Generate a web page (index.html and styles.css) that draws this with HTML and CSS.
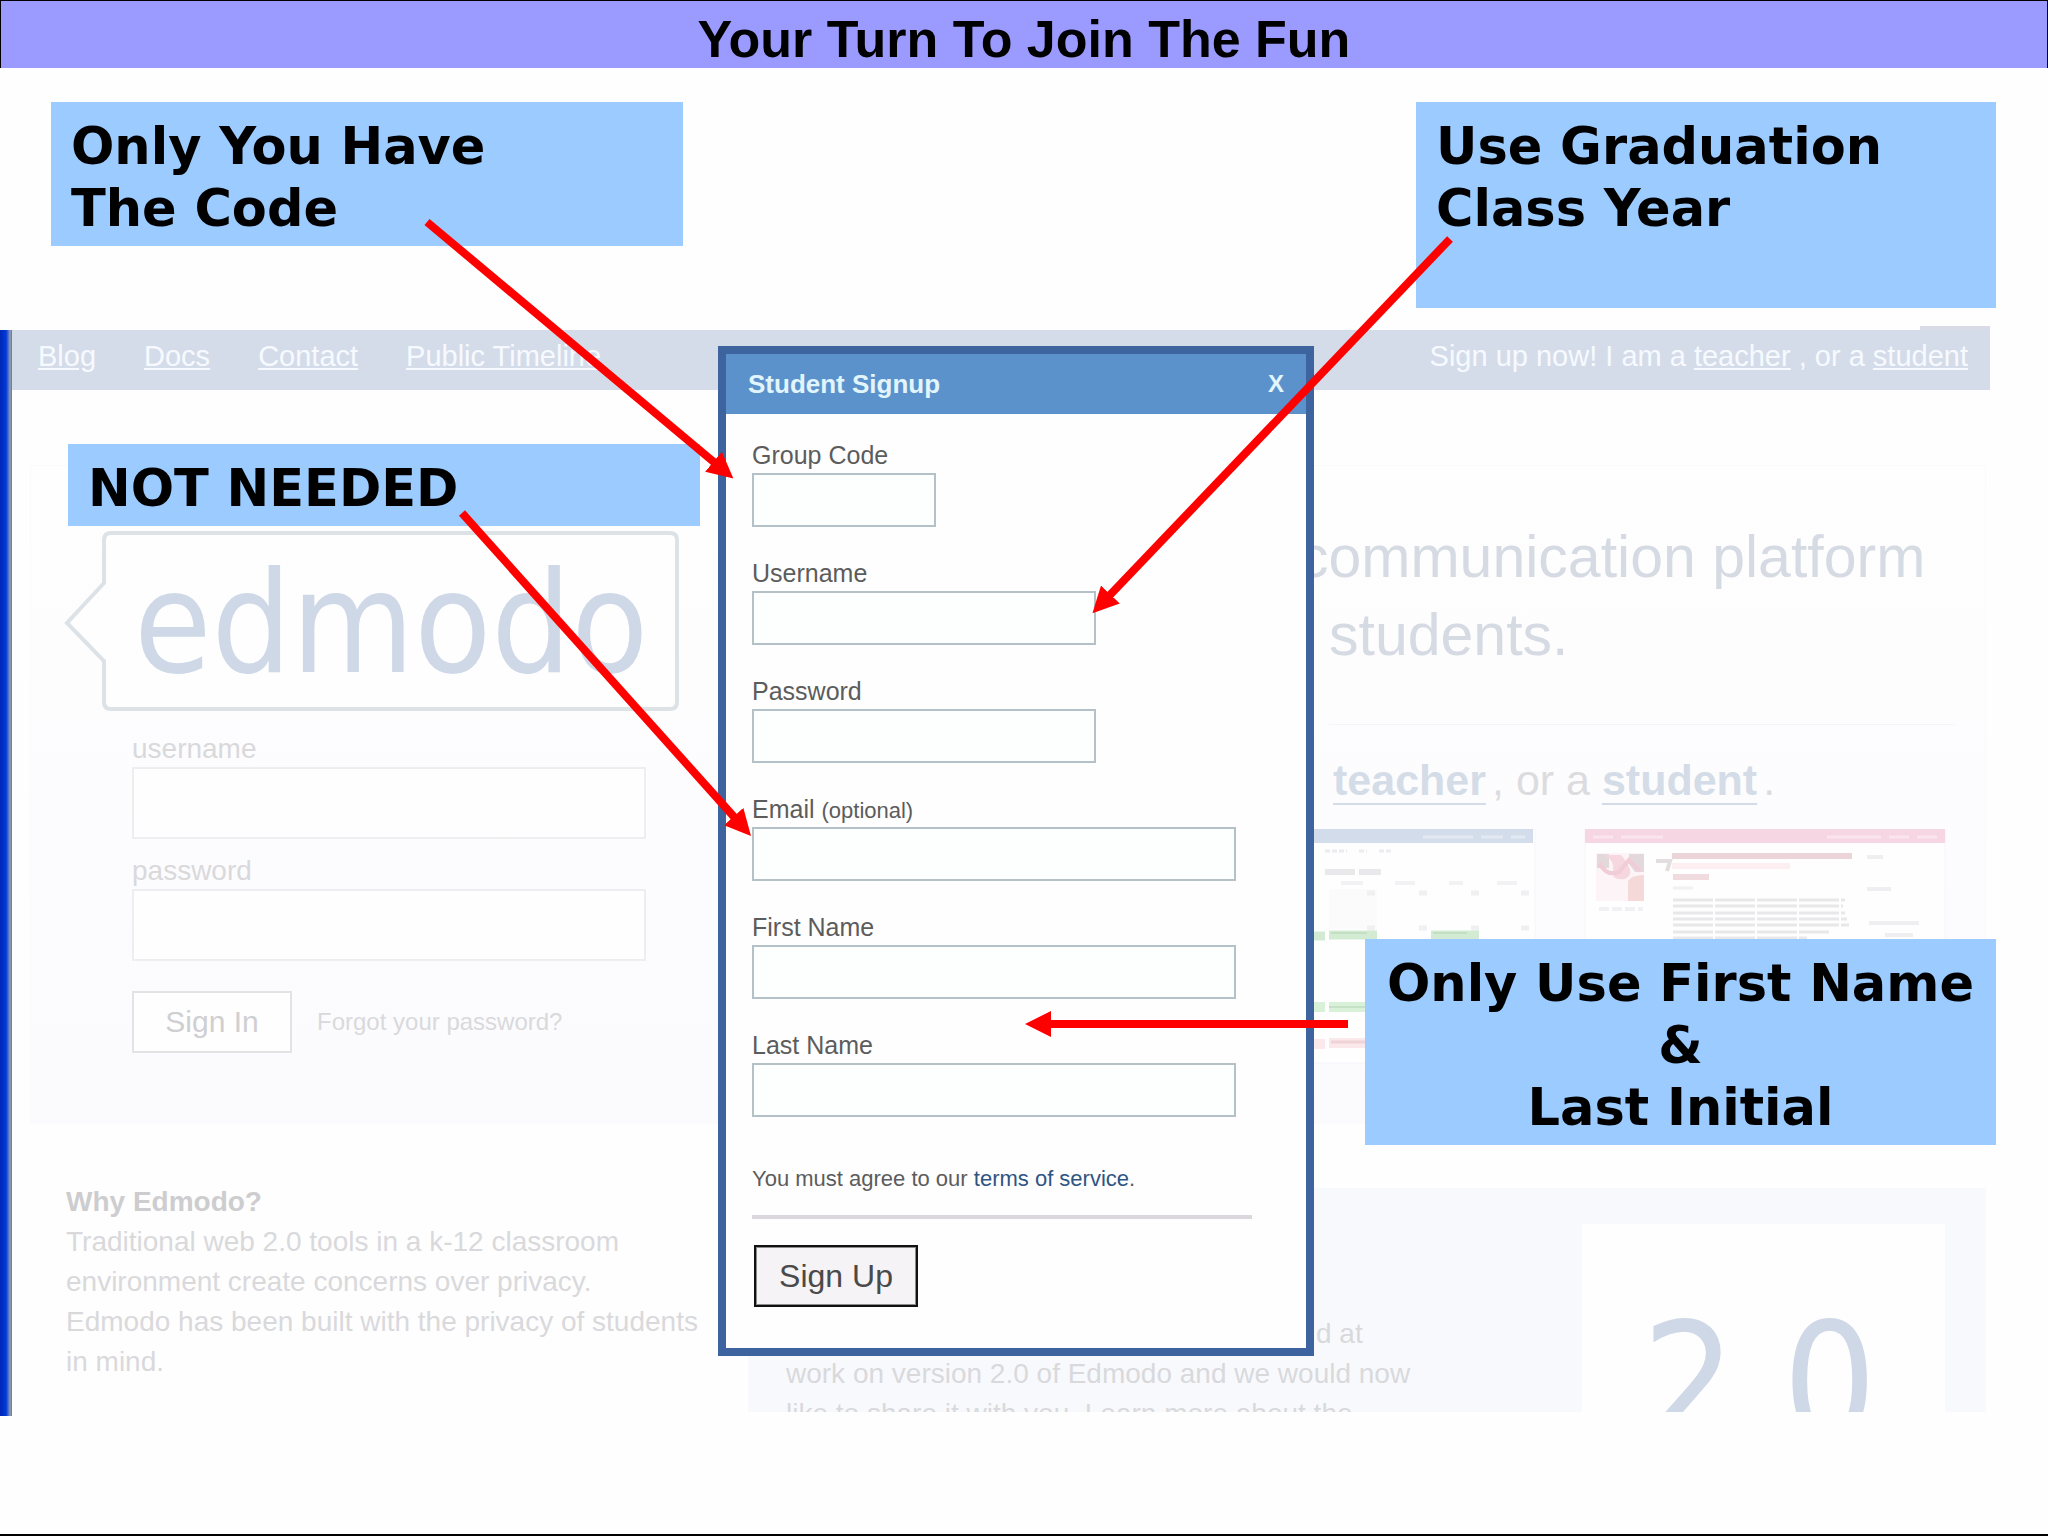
FILE: index.html
```html
<!DOCTYPE html>
<html lang="en">
<head>
<meta charset="UTF-8">
<title>Your Turn To Join The Fun</title>
<meta name="viewport" content="width=device-width, initial-scale=1.0">
<link rel="stylesheet" href="styles.css">
</head>

<body>

<h1 class="title">Your Turn To Join The Fun</h1>

<!-- FADED SITE -->
<div class="window">
    <div class="window-edge"></div>
    <div class="site">

        <nav class="nav">
            <div class="nav-links">
                <a href="#">Blog</a>
                <a href="#">Docs</a>
                <a href="#">Contact</a>
                <a href="#">Public Timeline</a>
            </div>
            <div>Sign up now! I am a <a href="#">teacher</a> , or a <a href="#">student</a></div>
        </nav>

        <div class="panel">
            <div class="left">
                <svg class="logo" width="616" height="182" viewBox="0 0 616 182">
                    <path d="M40 53V10q0-7 7-7H606q7 0 7 7V172q0 7-7 7H47q-7 0-7-7V131L3 93Z" fill="#fefefe" stroke="#dde2e7" stroke-width="4"/>
                    <text x="70" y="142" class="logo-text">edmodo</text>
                </svg>
                <form class="login">
                    <label for="login-user">username</label>
                    <input id="login-user" type="text">
                    <label for="login-pass">password</label>
                    <input id="login-pass" type="password">
                    <div class="login-row">
                        <button type="button">Sign In</button>
                        <a href="#">Forgot your password?</a>
                    </div>
                </form>
            </div>

            <div class="right">
                <div class="hero">communication platform</div>
                <div class="hero hero-end">students.</div>
                <hr>
                <div class="join"><a href="#">teacher</a>, or a <a href="#">student</a>.</div>
                <svg class="shots" width="686" height="240" viewBox="0 0 686 240">
                    <!-- calendar page -->
                    <rect x="0" y="0" width="236" height="234" fill="#fefefe" stroke="#f6f6fa"/>
                    <rect x="0" y="0" width="234" height="14" fill="#d2dcea"/>
                    <path d="M124 8h50M182 8h22M212 8h14" stroke="#e2e9f2" stroke-width="3"/>
                    <path d="M26 22h22M60 22h8M80 22h12" stroke="#ececef" stroke-width="3" stroke-dasharray="5 2"/>
                    <path d="M26 43h56" stroke="#e9e9eb" stroke-width="6" stroke-dasharray="30 4"/>
                    <path d="M42 54h22M96 54h20M150 54h14M198 54h20" stroke="#f2f2f4" stroke-width="4"/>
                    <rect x="30" y="60" width="48" height="40" fill="#fafbfa"/>
                    <path d="M68 64h8M120 64h8M172 64h8M222 64h8M68 99h8M120 99h8M172 99h8M222 99h8" stroke="#f0f0f2" stroke-width="5"/>
                    <path d="M14 107h12M30 106h48M132 106h48" stroke="#d3ebd3" stroke-width="9"/>
                    <path d="M32 104h36M134 104h34" stroke="#c3dfc3" stroke-width="2"/>
                    <path d="M14 178h12M30 178h48" stroke="#d9f0d9" stroke-width="10"/>
                    <path d="M30 178h48" stroke="#c6e2c6" stroke-width="2"/>
                    <path d="M14 215h12M30 214h48" stroke="#fae8ea" stroke-width="10"/>
                    <path d="M32 213h40" stroke="#efd3d6" stroke-width="3"/>
                    <!-- profile page -->
                    <rect x="286" y="0" width="360" height="234" fill="#fefefe" stroke="#f6f6fa"/>
                    <rect x="286" y="0" width="360" height="14" fill="#f6d6e3"/>
                    <path d="M294 8h20M322 8h42M528 8h54M590 8h20M618 8h20" stroke="#fae4ed" stroke-width="3"/>
                    <rect x="297" y="24" width="48" height="48" fill="#fcf4f6"/>
                    <path d="M298 25h12v14h-12ZM330 25h15v18h-9l-6-8Z" fill="#e3d9dd"/>
                    <path d="M306 26q10 6 8 16t12 8q8-4 4-12t-8-12Z" fill="#f6d7df"/>
                    <path d="M300 34q8 14 20 9l10-12 11 11" fill="none" stroke="#f0cdd6" stroke-width="4"/>
                    <path d="M329 52q4-6 16-6v26h-16Z" fill="#f5d8d8"/>
                    <path d="M300 80h44" stroke="#f1f1f3" stroke-width="4" stroke-dasharray="10 3"/>
                    <path d="M357 32h14l-3 10" fill="none" stroke="#e2dddf" stroke-width="4"/>
                    <rect x="373" y="24" width="180" height="6" fill="#ecd5d9"/>
                    <path d="M373 37h118" stroke="#fceef1" stroke-width="6"/>
                    <path d="M374 48h36" stroke="#f0dcdf" stroke-width="6"/>
                    <path d="M374 59h20" stroke="#f1f1f3" stroke-width="3"/>
                    <path d="M374 71h172M374 77h170M374 84h172M374 90h174M374 96h176M374 103h156M374 109h134" stroke="#e8e8ea" stroke-width="3" stroke-dasharray="40 2"/>
                    <path d="M568 28h16M568 60h24M570 94h50M586 106h28" stroke="#efeff2" stroke-width="4"/>
                </svg>
            </div>
        </div>

        <div class="lower">
            <div class="why">
                <h2>Why Edmodo?</h2>
                <p>Traditional web 2.0 tools in a k-12 classroom<br>environment create concerns over privacy.<br>Edmodo has been built with the privacy of students<br>in mind.</p>
            </div>
            <div class="news">
                <p>d at<br>work on version 2.0 of Edmodo and we would now<br>like to share it with you. Learn more about the</p>
                <div class="version">2.0</div>
            </div>
        </div>

    </div>
</div>

<!-- SIGNUP DIALOG -->
<form class="dialog">
    <div class="dialog-head">
        <span>Student Signup</span>
        <button type="button" class="close">X</button>
    </div>
    <div class="dialog-body">
        <label for="code">Group Code</label>
        <input id="code" class="short" type="text">
        <label for="user">Username</label>
        <input id="user" class="medium" type="text">
        <label for="pass">Password</label>
        <input id="pass" class="medium" type="password">
        <label for="email">Email <small>(optional)</small></label>
        <input id="email" type="text">
        <label for="first">First Name</label>
        <input id="first" type="text">
        <label for="last">Last Name</label>
        <input id="last" type="text">
        <p>You must agree to our <a href="#">terms of service</a>.</p>
        <hr>
        <button type="button" class="signup">Sign Up</button>
    </div>
</form>

<!-- CALLOUTS -->
<div class="callout code-note">Only You Have<br>The Code</div>
<div class="callout year-note">Use Graduation<br>Class Year<br>&nbsp;</div>
<div class="callout email-note">NOT NEEDED</div>
<div class="callout name-note">Only Use First Name<br>&amp;<br>Last Initial</div>

<svg class="arrows">
    <defs>
        <marker id="head" markerUnits="userSpaceOnUse" markerWidth="26" markerHeight="26" refX="2" refY="13" orient="auto">
            <path d="M0 0L26 13L0 26Z" fill="#ff0000"/>
        </marker>
    </defs>
    <g stroke="#ff0000" stroke-width="8">
        <line x1="427" y1="222" x2="715" y2="463" marker-end="url(#head)"/>
        <line x1="1450" y1="239" x2="1109" y2="596" marker-end="url(#head)"/>
        <line x1="462" y1="513" x2="735" y2="818" marker-end="url(#head)"/>
        <line x1="1348" y1="1024" x2="1049" y2="1024" marker-end="url(#head)"/>
    </g>
</svg>

</body>
</html>
```

FILE: styles.css
```css
* {
    box-sizing: border-box;
}

body {
    position: relative;
    margin: 0;
    min-height: 100vh;
    background: #fefefe;
    border-bottom: 2px solid #000;
    font-family: "Liberation Sans", Arial, sans-serif;
    overflow-x: hidden;
}

h1, h2, p {
    margin: 0;
}

button, input {
    font-family: inherit;
    border-radius: 0;
}

/* TITLE */
.title {
    height: 68px;
    line-height: 76px;
    font-size: 52px;
    text-align: center;
    background: #9b9bff;
    border: 1px solid #000;
    border-bottom: none;
}

/* SITE */
.window {
    display: flex;
    margin-top: 262px;
}

.window-edge {
    width: 12px;
    background: linear-gradient(90deg, #0028b4 0, #0038dc 6px, #3f66c4 8px, #8fa0c0 10px, #70747c 12px);
}

.site {
    flex: 1;
    min-width: 0;
    margin-right: 58px;
    padding-bottom: 4px;
    font-size: 28px;
    color: #d9d9dc;
}

.nav {
    position: relative;
    display: flex;
    justify-content: space-between;
    height: 60px;
    line-height: 52px;
    padding: 0 22px 0 26px;
    font-size: 29px;
    background: #d5dce9;
    color: #f6faff;
}

.nav::after {
    content: "";
    position: absolute;
    right: 0;
    top: -4px;
    width: 70px;
    height: 4px;
    background: #d9dce6;
}

.nav a {
    color: inherit;
}

.nav-links {
    display: flex;
    gap: 48px;
}

.panel {
    display: flex;
    justify-content: space-between;
    margin: 75px 4px 0 18px;
    background: linear-gradient(#fefefe, #fbfbfe);
    border: 1px solid #fbfafb;
}

.left {
    padding: 64px 0 70px 33px;
}

.logo {
    display: block;
}

.logo-text {
    font-family: "DejaVu Sans Condensed", "DejaVu Sans", sans-serif;
    font-size: 140px;
    fill: #cfd8e7;
}

.login {
    display: flex;
    flex-direction: column;
    width: 514px;
    margin: 19px 0 0 68px;
}

.login label {
    line-height: 36px;
}

.login input {
    height: 72px;
    margin-bottom: 14px;
    background: #fefefe;
    border: 2px solid #eeeef1;
}

.login-row {
    display: flex;
    align-items: center;
    gap: 25px;
    margin-top: 16px;
}

.login-row button {
    width: 160px;
    height: 62px;
    font-size: 30px;
    color: #cfcfd2;
    background: #fefefe;
    border: 2px solid #e3e3e6;
}

.login-row a {
    font-size: 24px;
    color: #d9d9dc;
    text-decoration: none;
}

.right {
    width: 686px;
    padding-top: 52px;
}

.hero {
    font-size: 59px;
    line-height: 78px;
    color: #d5dae3;
}

.hero-end {
    padding-left: 30px;
}

.right hr {
    margin: 50px 30px 30px;
    border: none;
    border-top: 1px solid #f5f4f7;
}

.join {
    padding-left: 34px;
    font-size: 43px;
    line-height: 50px;
    color: #dcdce0;
}

.join a {
    margin-right: 6px;
    font-weight: bold;
    color: #d3dce7;
    text-decoration-thickness: 2px;
    text-underline-offset: 8px;
}

.shots {
    display: block;
    margin-top: 24px;
}

.lower {
    display: flex;
    height: 230px;
    margin-top: 58px;
    line-height: 40px;
    overflow: hidden;
}

.why {
    width: 736px;
    padding-left: 54px;
}

.why h2 {
    font-size: 28px;
    color: #cdcdcf;
}

.news {
    flex: 1;
    display: flex;
    justify-content: space-between;
    margin: 6px 4px 0 0;
    padding: 36px 41px 0 38px;
    background: #f8f9fc;
}

.news p {
    padding-top: 90px;
    text-indent: 530px;
    white-space: nowrap;
}

.version {
    width: 363px;
    padding-left: 60px;
    font-family: "DejaVu Sans Condensed", "DejaVu Sans", sans-serif;
    font-size: 164px;
    line-height: 320px;
    color: #cfd8e7;
    background: #fefefe;
}

/* DIALOG */
.dialog {
    position: absolute;
    left: 718px;
    top: 346px;
    width: 596px;
    background: #fefefe;
    border: 8px solid #3e649f;
    color: #5c5c5c;
    font-size: 25px;
}

.dialog-head {
    display: flex;
    justify-content: space-between;
    align-items: center;
    height: 60px;
    padding: 0 22px;
    font-size: 26px;
    font-weight: bold;
    color: #e2f5fc;
    background: #5c92cb;
}

.close {
    padding: 0;
    font-size: 24px;
    font-weight: bold;
    color: inherit;
    background: none;
    border: none;
}

.dialog-body {
    padding: 23px 54px 41px 26px;
}

.dialog label {
    display: block;
    height: 36px;
    line-height: 36px;
}

.dialog small {
    font-size: 22px;
}

.dialog input {
    display: block;
    width: 484px;
    height: 54px;
    margin-bottom: 28px;
    background: #fdfefe;
    border: 2px solid #b4c2c8;
}

.dialog .short {
    width: 184px;
}

.dialog .medium {
    width: 344px;
}

.dialog p {
    margin-top: 42px;
    font-size: 22px;
    line-height: 40px;
}

.dialog p a {
    color: #2f5583;
    text-decoration: none;
}

.dialog hr {
    margin: 16px 0 26px;
    border: none;
    border-top: 4px solid #dad8de;
}

.signup {
    display: block;
    width: 164px;
    height: 62px;
    margin-left: 2px;
    font-size: 32px;
    color: #4a4a4a;
    background: #f5f3f5;
    border: 2px solid #111;
    box-shadow: inset 0 0 0 1px #8b8b8b;
}

/* CALLOUTS */
.callout {
    position: absolute;
    padding: 14px 20px 6px;
    font-family: "DejaVu Sans", Verdana, sans-serif;
    font-size: 51px;
    font-weight: bold;
    line-height: 62px;
    color: #000;
    background: #9bcbff;
}

.code-note {
    left: 51px;
    top: 102px;
    width: 632px;
}

.year-note {
    right: 52px;
    top: 102px;
    width: 580px;
}

.email-note {
    left: 68px;
    top: 444px;
    width: 632px;
}

.name-note {
    right: 52px;
    top: 939px;
    width: 631px;
    text-align: center;
}

.arrows {
    position: absolute;
    left: 0;
    top: 0;
    width: 100%;
    height: 100%;
    pointer-events: none;
}
```
